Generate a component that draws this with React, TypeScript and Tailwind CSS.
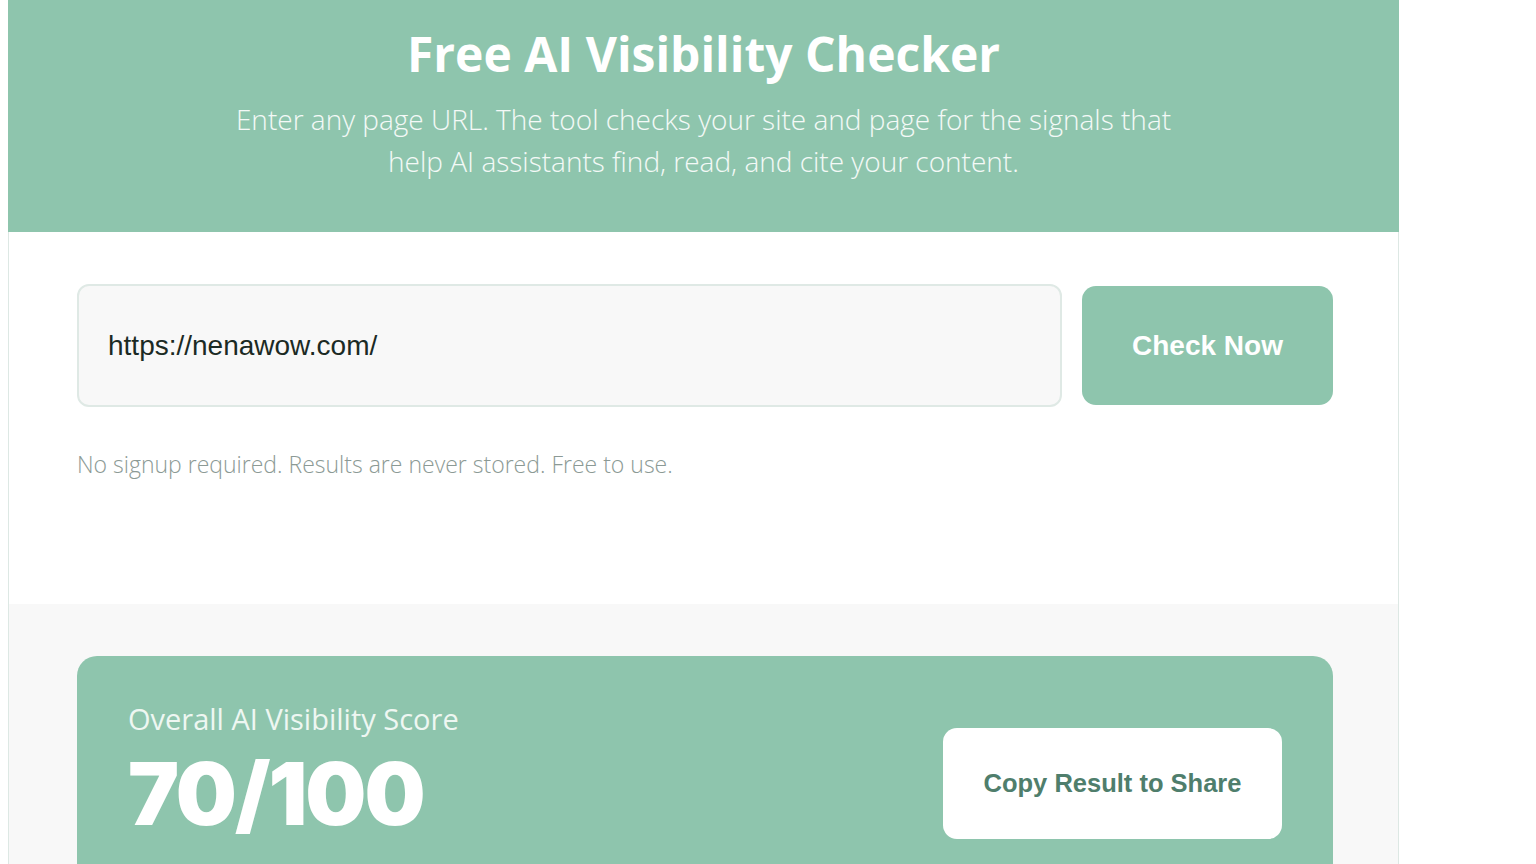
import { useState } from 'react';

const sans = "font-['Open_Sans','Noto_Sans',sans-serif]";
const arial = "font-['Liberation_Sans',Arial,sans-serif]";

function App() {
  const [url, setUrl] = useState('https://nenawow.com/');

  return (
    <div className="min-h-screen bg-white">
      <div className="ml-[8px] w-[1391px] border-x border-[#dde8e4]">
        {/* Hero */}
        <header className="-mx-px bg-[#8ec5ad] px-8 pt-[24px] pb-[50px] text-center text-white">
          <h1 className={`${sans} text-[48px] font-bold leading-[60px]`}>
            Free AI Visibility Checker
          </h1>
          <p className={`${sans} mx-auto mt-[14px] max-w-[1000px] text-[28px] font-light leading-[42px] text-white/90`}>
            Enter any page URL. The tool checks your site and page for the signals that
            <br />
            help AI assistants find, read, and cite your content.
          </p>
        </header>

        {/* Form */}
        <section className="pl-[68px] pr-[65px] pt-[52px] pb-[125px]">
          <div className="flex items-center gap-5">
            <input
              value={url}
              onChange={(e) => setUrl(e.target.value)}
              className={`${arial} h-[123px] flex-1 rounded-xl border-2 border-[#dfe9e5] bg-[#f8f8f8] px-[29px] text-[28px] text-[#1b2a24] outline-none`}
            />
            <button
              className={`${arial} h-[119px] w-[251px] rounded-[14px] bg-[#8ec5ad] text-[28px] font-bold text-white`}
            >
              Check Now
            </button>
          </div>
          <p className={`${sans} mt-[42px] text-[23px] font-light leading-[30px] text-[#8c9a95]`}>
            No signup required. Results are never stored. Free to use.
          </p>
        </section>

        {/* Results */}
        <section className="bg-[#f8f8f8] pl-[68px] pr-[65px] pt-[52px] pb-10">
          <div className="rounded-[20px] bg-[#8ec5ad] px-[51px] pt-[44px] pb-10">
            <div className="flex items-start justify-between">
              <div>
                <div className={`${sans} text-[29px] leading-[38px] text-[#eef7f2]`}>
                  Overall AI Visibility Score
                </div>
                <div className="mt-[6px] font-['Inter',sans-serif] text-[86px] font-black leading-[100px] tracking-[-2px] text-white">
                  70/100
                </div>
                <div className={`${sans} mt-3 text-[22px] leading-[30px] text-white/90`}>
                  Good foundation, with room to improve.
                </div>
              </div>
              <button
                className={`${arial} mt-[28px] h-[111px] w-[339px] rounded-[14px] bg-white text-[25.5px] font-bold text-[#4f7e6c]`}
              >
                Copy Result to Share
              </button>
            </div>
          </div>
        </section>
      </div>
    </div>
  );
}

export default App;
